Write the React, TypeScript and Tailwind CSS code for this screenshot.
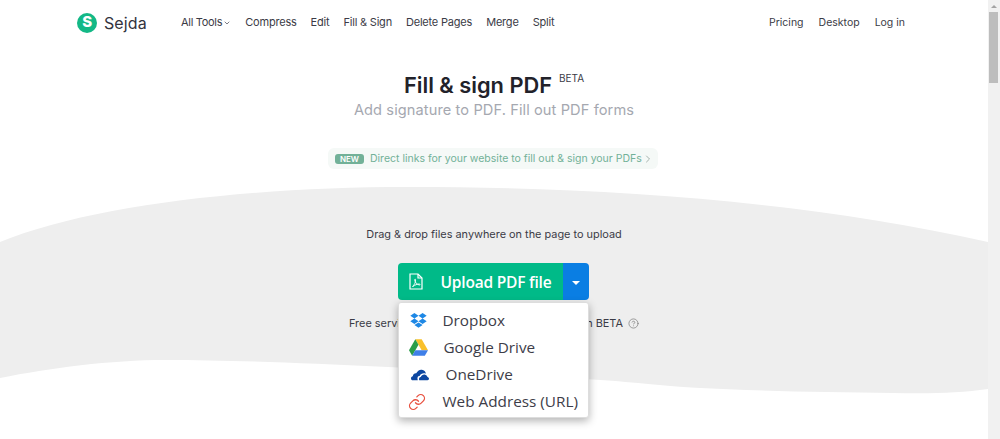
import { ChevronDown, ChevronRight, CircleHelp, Link } from 'lucide-react'

const navLinks = ['Compress', 'Edit', 'Fill & Sign', 'Delete Pages', 'Merge', 'Split']
const rightLinks = ['Pricing', 'Desktop', 'Log in']

function DropboxIcon() {
  return (
    <svg viewBox="0 0 24 22" className="w-[17px] h-[15px]">
      <path fill="#1e88e5" d="M6 0 0 4l6 4 6-4zM18 0l-6 4 6 4 6-4zM0 12l6 4 6-4-6-4zM18 8l-6 4 6 4 6-4zM6 17.5l6 4 6-4-6-3.7z" />
    </svg>
  )
}

function DriveIcon() {
  return (
    <svg viewBox="0 0 24 21" className="w-[19px] h-[17px]">
      <path fill="#f9c02b" d="M8 0h8l8 14h-8z" />
      <path fill="#2a9d4a" d="M8 0 0 14l4 7 8-14z" />
      <path fill="#3f7fe8" d="M8 14h16l-4 7H4z" />
    </svg>
  )
}

function OneDriveIcon() {
  return (
    <svg viewBox="0 0 24 15" className="w-[18px] h-[12px]">
      <path fill="#0d47a1" d="M9 14.5H2.5C.9 14.5 0 13.3 0 12c0-1.500 1-2.500 2.400-2.700C2.700 6.500 4.800 5 7 5.300 8.500 2 11.500 0 14.500.5c3 .4 5 2.600 5.400 5.200-4-1.300-7 .4-8.500 3-2-.3-3.600 1.500-2.400 5.800z" />
      <path fill="#0d47a1" d="M11 14.500c-1-2.300.2-4.300 2-4.500 1-2.500 3.500-3.700 6-3 1.800.5 2.800 1.800 3 3.200 1.200.3 2 1.300 2 2.400 0 1-.8 1.900-2 1.900z" />
    </svg>
  )
}

function PdfIcon() {
  return (
    <svg viewBox="0 0 14 17" fill="none" stroke="white" strokeWidth="1.200" className="w-[14px] h-[17px]">
      <path d="M1 1h8l4 4v11H1z" />
      <path d="M9 1v4h4" />
      <path d="M3.500 13.500C5.500 12 7 8.500 6.500 6.500c-.3-.8-1-.3-.8.700.5 2.500 2.500 4.500 4.800 4.800 1 0 .8-1-.3-1-2 0-4.500 1-6 2.500z" strokeWidth="0.900" />
    </svg>
  )
}

const sources = [
  { label: 'Dropbox', icon: <DropboxIcon />, iconBox: 'pl-[11px] w-[44px]' },
  { label: 'Google Drive', icon: <DriveIcon />, iconBox: 'pl-[10px] w-[45px]' },
  { label: 'OneDrive', icon: <OneDriveIcon />, iconBox: 'pl-[12px] w-[47px]' },
  {
    label: 'Web Address (URL)',
    icon: <Link className="w-[18px] h-[18px] text-[#e8503f]" strokeWidth={1.700} />,
    iconBox: 'pl-[9px] w-[44px]',
  },
]

export default function App() {
  return (
    <div className="h-[439px] overflow-hidden flex bg-white text-[#2a2a33] font-['Inter','Liberation_Sans',sans-serif]">
      <div className="relative flex-1 min-w-0">
        {/* wave behind the upload area */}
        <svg viewBox="0 0 988 439" className="absolute inset-0 w-[988px] h-[439px]">
          <path
            fill="#eeeeee"
            d="M0 242C90 205 250 187 408 187 600 187 800 200 988 242V389C960 393 930 394 893 393 800 392 700 390 638 383 540 375 300 360 166 360 110 360 50 368 0 378Z"
          />
        </svg>

        <div className="relative">
          <header className="h-[45px] flex items-center text-[11px] tracking-[-0.2px] text-[#3b3b46]">
            <div className="flex items-center gap-[7px] ml-[77px] w-[104px]">
              <span className="w-[20px] h-[20px] rounded-full bg-[#13b886] text-white text-[15px] font-extrabold flex items-center justify-center">
                S
              </span>
              <span className="text-[16px] tracking-[0.1px] text-[#33333d]">Sejda</span>
            </div>
            <nav className="flex items-center gap-[14px]">
              <span className="flex items-center gap-[1px] tracking-[-0.3px]">
                All Tools <ChevronDown className="w-[8px] h-[8px]" />
              </span>
              {navLinks.map((link) => (
                <span key={link}>{link}</span>
              ))}
            </nav>
            <nav className="flex items-center gap-[15px] ml-auto mr-[83px] text-[10.500px] tracking-[0px]">
              {rightLinks.map((link) => (
                <span key={link}>{link}</span>
              ))}
            </nav>
          </header>

          <div className="flex flex-col items-center">
            <div className="mt-[26px] flex items-start gap-[7px] h-[29px]">
              <h1 className="text-[21.800px] leading-[29px] font-semibold text-[#22222a]">Fill &amp; sign PDF</h1>
              <span className="text-[10px] leading-[14px] text-[#3b3b46]">BETA</span>
            </div>
            <p className="text-[14.600px] leading-[20px] text-[#a5a8b0] tracking-[0.1px]">
              Add signature to PDF. Fill out PDF forms
            </p>

            <div className="mt-[28px] mr-[2px] h-[21px] w-[330px] pl-[7px] rounded-[6px] bg-[#f5f9f7] flex items-center gap-[6px] text-[10.500px] text-[#72b198]">
              <span className="h-[10px] w-[29px] rounded-[3px] bg-[#72b198] text-white text-[8px] font-semibold flex items-center justify-center">
                NEW
              </span>
              Direct links for your website to fill out &amp; sign your PDFs
              <ChevronRight className="w-[12px] h-[12px] -ml-[6px] text-[#8a9a94]" strokeWidth={1.500} />
            </div>

            <p className="mt-[57px] text-[10.900px] leading-[16px] text-[#3b3b46]">
              Drag &amp; drop files anywhere on the page to upload
            </p>

            <div className="relative mt-[21px] mr-[2px] flex h-[37px] w-[191px] font-['Open_Sans','Noto_Sans',sans-serif]">
              <div className="flex items-center w-[165px] rounded-l-[4px] bg-[#00ba88] text-white">
                <span className="ml-[11px] w-[32px] flex">
                  <PdfIcon />
                </span>
                <span className="pt-[3px] text-[15.500px] font-semibold tracking-[-0.2px]">Upload PDF file</span>
              </div>
              <div className="flex items-center justify-center flex-1 pt-[3px] rounded-r-[4px] bg-[#0a7ee3]">
                <span className="w-0 h-0 border-x-[4px] border-x-transparent border-t-[4px] border-t-white" />
              </div>

              {/* upload source menu */}
              <div className="absolute left-0 top-[39px] w-[191px] h-[116px] pt-[4px] z-10 bg-white rounded-[3px] border border-[#dddddd] shadow-[0_3px_8px_rgba(0,0,0,0.3)] text-[15.300px] text-[#3d3d48]">
                {sources.map((source) => (
                  <div key={source.label} className="flex items-center h-[27px]">
                    <span className={`flex items-center shrink-0 ${source.iconBox}`}>{source.icon}</span>
                    <span className="whitespace-nowrap">{source.label}</span>
                  </div>
                ))}
              </div>
            </div>

            <p className="mt-[15px] flex items-center gap-[5px] w-[290px] text-[10.900px] leading-[16px] text-[#3b3b46]">
              <span>Free service</span>
              <span className="ml-auto">in BETA</span>
              <CircleHelp className="w-[11px] h-[11px] text-[#777777]" strokeWidth={1.500} />
            </p>
          </div>
        </div>
      </div>

      {/* scrollbar */}
      <div className="w-[12px] shrink-0 bg-[#f1f1f1] flex flex-col pl-[1px] pr-[2px]">
        <div className="h-[12px] flex items-center justify-center">
          <span className="w-0 h-0 border-x-[3px] border-x-transparent border-b-[3px] border-b-[#a3a3a3]" />
        </div>
        <div className="w-full h-[71px] bg-[#bdbdbd]" />
      </div>
    </div>
  )
}
